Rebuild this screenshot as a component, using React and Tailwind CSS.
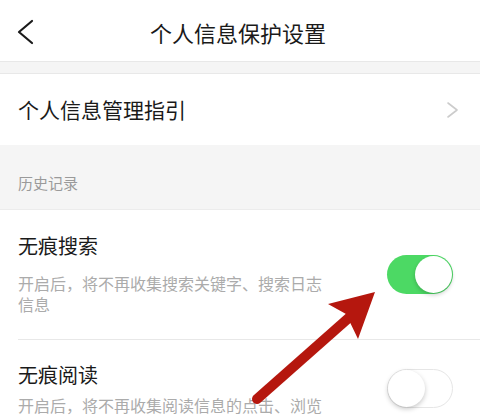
import React from "react";

function Toggle({ on }) {
  return on ? (
    <div className="relative w-[66px] h-[39px] rounded-full bg-[#4cd964] shrink-0">
      <div className="absolute right-[1px] top-[1px] w-[37px] h-[37px] rounded-full bg-white shadow-[0_2px_4px_rgba(0,0,0,0.2)]" />
    </div>
  ) : (
    <div className="relative w-[66px] h-[39px] rounded-full bg-white border border-[#e6e6e6] shrink-0">
      <div className="absolute left-0 top-0 w-[37px] h-[37px] rounded-full bg-white shadow-[0_2px_5px_rgba(0,0,0,0.22)]" />
    </div>
  );
}

export default function App() {
  return (
    <div className="relative w-[480px] h-[420px] overflow-hidden bg-white font-['Noto_Sans_CJK_SC','Noto_Sans',sans-serif]">
      {/* Header */}
      <header className="h-[61px] grid grid-cols-[1fr_auto_1fr] items-center pt-[3px]">
        <div className="pl-[17px] flex items-center">
          <svg width="18" height="26" viewBox="0 0 18 26" fill="none">
            <polyline points="15,2 2,13 15,24" stroke="#1a1a1a" strokeWidth="2.2" strokeLinecap="round" strokeLinejoin="round" />
          </svg>
        </div>
        <h1 className="text-[22px] leading-[30px] text-[#1a1a1a] pr-[4px]">个人信息保护设置</h1>
        <div />
      </header>

      <div className="h-[13px] bg-[#f5f5f5] border-y border-[#e8e8e8]" />

      {/* Guide row */}
      <div className="h-[71px] flex items-center justify-between pl-[18px] pr-[21px]">
        <span className="text-[21px] text-[#1a1a1a]">个人信息管理指引</span>
        <svg width="13" height="18" viewBox="0 0 13 18" fill="none">
          <polyline points="2,2 11,9 2,16" stroke="#cccccc" strokeWidth="1.6" strokeLinecap="round" strokeLinejoin="round" />
        </svg>
      </div>

      {/* Section */}
      <div className="h-[65px] bg-[#f5f5f5] pl-[18px] pt-[28px] border-b border-[#ececec]">
        <span className="block text-[15px] leading-[20px] text-[#9a9a9a]">历史记录</span>
      </div>

      {/* 无痕搜索 */}
      <div className="flex justify-between pl-[18px] pr-[27px] pt-[22px] pb-[24px]">
        <div>
          <div className="text-[20px] leading-[28px] text-[#1a1a1a]">无痕搜索</div>
          <p className="mt-[13px] w-[310px] text-[16px] leading-[21px] text-[#ababab]">
            开启后，将不再收集搜索关键字、搜索日志信息
          </p>
        </div>
        <div className="mt-[23px]">
          <Toggle on />
        </div>
      </div>

      <div className="ml-[18px] h-px bg-[#e8e8e8]" />

      {/* 无痕阅读 */}
      <div className="flex justify-between pl-[18px] pr-[27px] pt-[21px]">
        <div>
          <div className="text-[20px] leading-[28px] text-[#1a1a1a]">无痕阅读</div>
          <p className="mt-[6px] w-[310px] text-[16px] leading-[21px] text-[#ababab]">
            开启后，将不再收集阅读信息的点击、浏览记录
          </p>
        </div>
        <div className="mt-[8px]">
          <Toggle on={false} />
        </div>
      </div>

      {/* Red annotation arrow */}
      <svg className="absolute left-0 top-0 pointer-events-none" width="480" height="420" viewBox="0 0 480 420">
        <line x1="257" y1="399" x2="352" y2="315" stroke="#b5170e" strokeWidth="10" strokeLinecap="round" />
        <polygon points="375,292 328,304 346,314 358,339" fill="#b5170e" />
      </svg>
    </div>
  );
}
